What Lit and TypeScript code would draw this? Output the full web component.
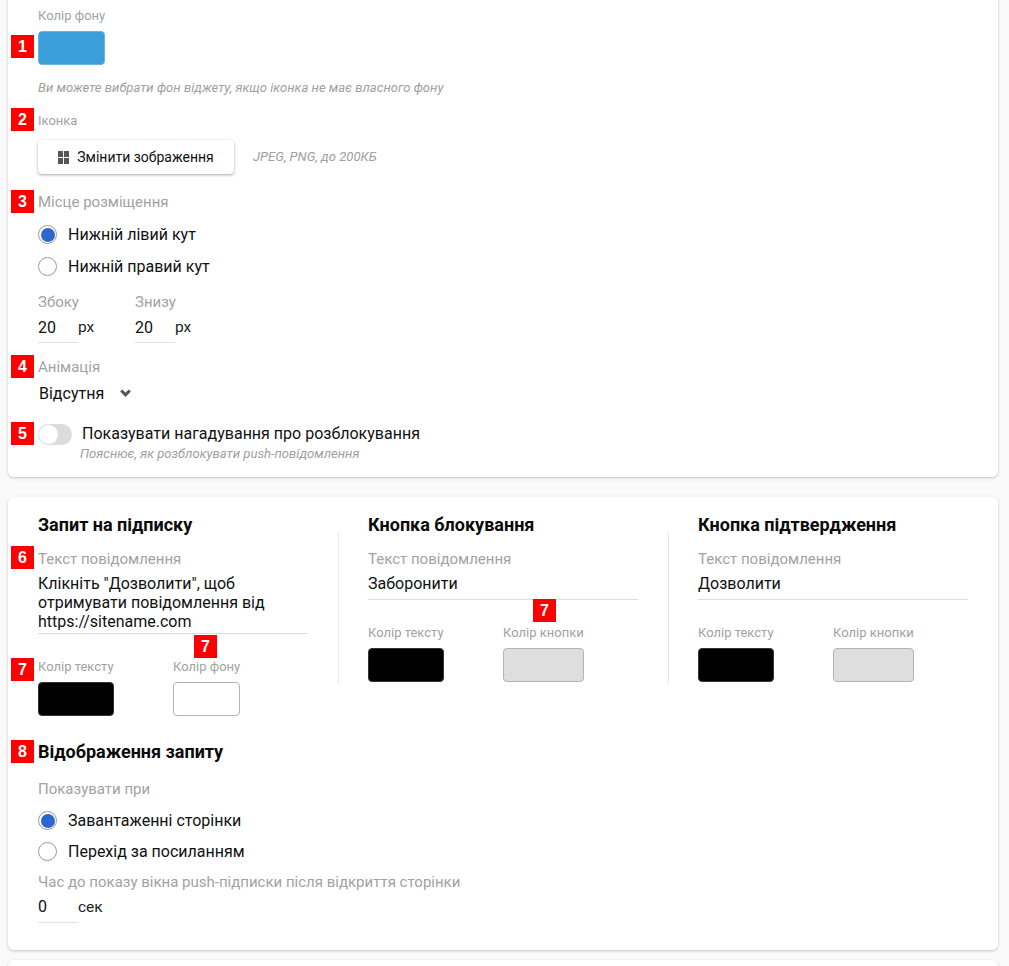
import { LitElement, html, css } from "lit";
import { customElement } from "lit/decorators.js";

const badges: [string, number, number][] = [
  ["1", 11, 35], ["2", 11, 108], ["3", 11, 190], ["4", 11, 355], ["5", 11, 422],
  ["6", 11, 546], ["7", 11, 658], ["7", 194, 635], ["7", 533, 599], ["8", 11, 740],
];

@customElement("app-root")
export class AppRoot extends LitElement {
  static styles = css`
    :host { display: block; position: relative; height: 966px; overflow: hidden; background: #fafafa;
      font-family: Roboto, "Noto Sans", sans-serif; color: #111; font-size: 16px; }
    .page { display: flex; flex-direction: column; padding: 0 11px 0 8px; margin-top: -10px; }
    .card { background: #fff; border-radius: 6px; box-shadow: 0 1px 3px rgba(0,0,0,.22); }
    .c1 { height: 487px; padding: 18px 30px 0; box-sizing: border-box; margin-bottom: 20px; }
    .c2 { height: 453px; box-sizing: border-box; margin-bottom: 10px; }
    .c3 { height: 40px; }
    .lab13 { font-size: 13px; line-height: 16px; color: #a2a2a2; }
    .lab15 { font-size: 15px; line-height: 18px; color: #a2a2a2; }
    .sw { border-radius: 4px; box-sizing: border-box; height: 34px; border: 1px solid #b4b4b4; }
    .blue { width: 67px; background: #3a9edb; border-color: #6fb4de; margin-top: 7px; }
    .hint { font-size: 13.1px; line-height: 16px; font-style: italic; color: #a0a0a0; }
    .btnrow { display: flex; align-items: center; gap: 19px; margin-top: 11px; }
    .btn { width: 196px; height: 34px; box-sizing: border-box; border-radius: 4px; background: #fff;
      box-shadow: 0 1px 3px rgba(0,0,0,.35); display: flex; align-items: center; justify-content: center;
      gap: 8px; font-size: 14px; color: #111; }
    .btn svg { display: block; }
    .radio { display: flex; align-items: center; gap: 11px; height: 19px; font-size: 16px; }
    .dot { width: 19px; height: 19px; box-sizing: border-box; border-radius: 50%; border: 1px solid #999;
      display: flex; align-items: center; justify-content: center; flex: none; background: #fff; }
    .dot i { width: 14px; height: 14px; border-radius: 50%; background: #2b67cf; display: block; }
    .fields { display: flex; margin-top: 17px; }
    .fields > div { width: 97px; }
    .num { display: flex; align-items: flex-start; }
    .num .box { width: 40px; box-sizing: border-box; border-bottom: 1px solid #e2e2e2; font-size: 16px;
      line-height: 22px; padding-top: 6px; height: 32px; }
    .num .unit { font-size: 15.5px; line-height: 22px; padding-top: 5px; color: #222; }
    .sel { display: flex; align-items: center; margin-left: 1px; margin-top: 8px; height: 18px; font-size: 16px; gap: 16px; }
    .tog { display: flex; gap: 10px; margin-top: 22px; }
    .track { width: 34px; height: 21px; border-radius: 11px; background: #dcdcdc; flex: none; }
    .knob { width: 19px; height: 19px; border-radius: 50%; background: #fff; margin: 1px 0 0 1px; display: block; }
    .togtxt { font-size: 16px; line-height: 20px; }
    .togtxt .hint { margin-left: -2px; margin-top: 2px; }
    .cols { display: flex; align-items: flex-start; padding-top: 18px; height: 168px; }
    .col { width: 270px; padding: 0 30px; flex: none; }
    .col + .col { border-left: 1px solid #e8e8e8; margin-top: 18px; padding-left: 29px; height: 150px; }
    .col + .col .h { margin-top: -18px; }
    h3 { font-size: 18px; font-weight: 700; line-height: 20px; margin: 0; color: #0a0a0a; }
    .ttl { margin-top: 15px; }
    .area { line-height: 19px; font-size: 16px; margin-top: 6px; padding-bottom: 2px; border-bottom: 1px solid #ddd; }
    .line { padding-bottom: 6px; }
    .pair { display: flex; margin-top: 25px; }
    .pair > div { display: flex; flex-direction: column; gap: 7px; }
    .black { width: 76px; background: #000; border-color: #333; }
    .white { width: 67px; background: #fff; }
    .gray { width: 81px; background: #dedede; }
    .gap { margin-left: 59px; }
    .req { padding: 0 30px; }
    .req .radio + .radio { margin-top: 12px; }
    .req .box { padding-top: 5px; }
    .badge { position: absolute; width: 23px; height: 23px; background: #fe0000; color: #fff;
      font: 700 16px/23px "Liberation Sans", sans-serif; text-align: center; }
  `;

  private num(v: string, unit: string) {
    return html`<div class="num"><div class="box">${v}</div><div class="unit">${unit}</div></div>`;
  }
  private col(title: string, value: string, secondLabel: string) {
    return html`<div class="col">
      <h3 class="h">${title}</h3>
      <div class="lab15 ttl">Текст повідомлення</div>
      <div class="area line">${value}</div>
      <div class="pair">
        <div><div class="lab13">Колір тексту</div><div class="sw black"></div></div>
        <div class="gap"><div class="lab13">${secondLabel}</div><div class="sw gray"></div></div>
      </div>
    </div>`;
  }

  render() {
    return html`<div class="page">
      <section class="card c1">
        <div class="lab13">Колір фону</div>
        <div class="sw blue"></div>
        <div class="hint" style="margin-top:15px">Ви можете вибрати фон віджету, якщо іконка не має власного фону</div>
        <div class="lab13" style="margin-top:17px">Іконка</div>
        <div class="btnrow">
          <div class="btn">
            <svg width="11" height="13" viewBox="0 0 11 13"><path fill="#555" d="M0 0h5v6H0zM6 0h5v6H6zM0 7h5v6H0zM6 7h5v6H6z"/></svg>
            Змінити зображення
          </div>
          <div class="hint">JPEG, PNG, до 200КБ</div>
        </div>
        <div class="lab15" style="margin-top:19px">Місце розміщення</div>
        <div class="radio" style="margin-top:14px"><span class="dot"><i></i></span>Нижній лівий кут</div>
        <div class="radio" style="margin-top:13px"><span class="dot"></span>Нижній правий кут</div>
        <div class="fields">
          <div><div class="lab15">Збоку</div>${this.num("20", "рх")}</div>
          <div><div class="lab15">Знизу</div>${this.num("20", "рх")}</div>
        </div>
        <div class="lab15" style="margin-top:15px">Анімація</div>
        <div class="sel">Відсутня
          <svg width="11" height="8" viewBox="0 0 11 8"><path d="M1.2 1.5 5.5 5.8 9.8 1.5" fill="none" stroke="#555" stroke-width="3"/></svg>
        </div>
        <div class="tog">
          <div class="track"><span class="knob"></span></div>
          <div class="togtxt">Показувати нагадування про розблокування
            <div class="hint">Пояснює, як розблокувати push-повідомлення</div>
          </div>
        </div>
      </section>
      <section class="card c2">
        <div class="cols">
          <div class="col">
            <h3>Запит на підписку</h3>
            <div class="lab15 ttl">Текст повідомлення</div>
            <div class="area">Клікніть "Дозволити", щоб<br />отримувати повідомлення від<br />https://sitename.com</div>
            <div class="pair">
              <div><div class="lab13">Колір тексту</div><div class="sw black"></div></div>
              <div class="gap"><div class="lab13">Колір фону</div><div class="sw white"></div></div>
            </div>
          </div>
          ${this.col("Кнопка блокування", "Заборонити", "Колір кнопки")}
          ${this.col("Кнопка підтвердження", "Дозволити", "Колір кнопки")}
        </div>
        <div class="req">
          <h3 style="margin-top:59px">Відображення запиту</h3>
          <div class="lab15" style="margin-top:18px">Показувати при</div>
          <div class="radio" style="margin-top:13px"><span class="dot"><i></i></span>Завантаженні сторінки</div>
          <div class="radio"><span class="dot"></span>Перехід за посиланням</div>
          <div class="lab15" style="margin-top:12px">Час до показу вікна push-підписки після відкриття сторінки</div>
          ${this.num("0", "сек")}
        </div>
      </section>
      <section class="card c3"></section>
    </div>
    ${badges.map(([t, x, y]) => html`<span class="badge" style="left:${x}px;top:${y}px">${t}</span>`)}`;
  }
}
